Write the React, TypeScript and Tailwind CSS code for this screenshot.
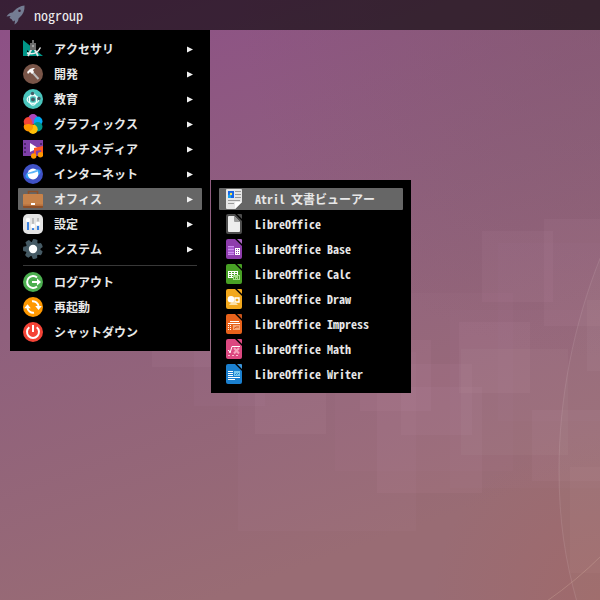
import type { ReactNode } from "react";

const FONT =
  "font-['Noto_Sans_Mono_CJK_JP','Noto_Sans_CJK_JP',monospace]";

/* ---------- wallpaper ---------- */

const SQUARES: [number, number, number, number, number][] = [
  [482, 231, 71, 71, 0.045],
  [544, 219, 107, 107, 0.04],
  [450, 310, 170, 178, 0.015],
  [459, 322, 71, 71, 0.045],
  [461, 349, 107, 106, 0.035],
  [498, 243, 120, 178, 0.015],
  [360, 340, 71, 71, 0.04],
  [401, 364, 71, 71, 0.04],
  [377, 387, 105, 106, 0.04],
  [335, 293, 178, 178, 0.02],
  [532, 410, 71, 71, 0.04],
  [570, 467, 106, 106, 0.03],
  [587, 300, 71, 71, 0.045],
  [238, 352, 178, 179, 0.025],
  [255, 363, 71, 71, 0.045],
  [194, 300, 71, 106, 0.025],
  [152, 296, 71, 71, 0.045],
];

function Wallpaper() {
  return (
    <svg
      aria-hidden="true"
      className="absolute inset-0 h-full w-full"
      viewBox="0 0 600 600"
      preserveAspectRatio="xMidYMid slice"
    >
      <defs>
        <linearGradient id="sky" x1="0" y1="0" x2="0.35" y2="1">
          <stop offset="0" stopColor="#8d4f87" />
          <stop offset="0.5" stopColor="#8f607d" />
          <stop offset="1" stopColor="#996c74" />
        </linearGradient>
        <radialGradient id="warm" cx="1" cy="1" r="0.28">
          <stop offset="0" stopColor="#a56863" stopOpacity="0.5" />
          <stop offset="1" stopColor="#a56863" stopOpacity="0" />
        </radialGradient>
        <radialGradient id="dusk" cx="1" cy="0" r="0.6">
          <stop offset="0" stopColor="#80586a" stopOpacity="0.5" />
          <stop offset="1" stopColor="#80586a" stopOpacity="0" />
        </radialGradient>
      </defs>
      <rect width="600" height="600" fill="url(#sky)" />
      <rect width="600" height="600" fill="url(#warm)" />
      <rect width="600" height="600" fill="url(#dusk)" />
      {SQUARES.map(([x, y, w, h, o], i) => (
        <rect key={i} x={x} y={y} width={w} height={h} fill="#ffd8ee" opacity={o} />
      ))}
      <path
        d="M601 256C573 325 559 400 559 470C559 520 565 560 577 602H601Z"
        fill="#d8e0b0"
        fillOpacity="0.04"
        stroke="#e0c4cc"
        strokeOpacity="0.16"
      />
      <path d="M547 601Q577 580 601 556" fill="none" stroke="#e8c8b0" strokeOpacity="0.25" />
    </svg>
  );
}

/* ---------- icons ---------- */

function Icon({ children }: { children: ReactNode }) {
  return (
    <svg aria-hidden="true" width="20" height="20" viewBox="0 0 20 20" className="shrink-0">
      {children}
    </svg>
  );
}

const AccessoriesIcon = () => (
  <Icon>
    <path d="M0 1L20 17H0Z" fill="#009688" />
    <path d="M4 11V13H6Z" fill="#000" />
    <path d="M8.5 10L5 17M11.5 10L15 17" stroke="#e0e0e0" strokeWidth="1.8" />
    <path d="M4 14Q13 17 17.5 8.5" fill="none" stroke="#eee" strokeWidth="1.4" />
    <path d="M9 1H11V4H13V11H7V4H9Z" fill="#6b6b6b" />
    <circle cx="10" cy="7" r="1.2" fill="#a5a5a5" />
  </Icon>
);

const DevelopmentIcon = () => (
  <Icon>
    <circle cx="10" cy="10" r="10" fill="#795548" />
    <path d="M9 8L15.5 15" stroke="#bdbdbd" strokeWidth="2" />
    <path d="M4 8L7 5L10 4H12L10 6L11 8L9 10L7 8L5 10Z" fill="#fafafa" />
  </Icon>
);

const EducationIcon = () => (
  <Icon>
    <circle cx="10" cy="10" r="10" fill="#4ac5bd" />
    <g fill="none" stroke="#f4ffff" strokeWidth="1.3">
      <ellipse cx="10" cy="10.5" rx="5.8" ry="3.8" />
      <ellipse cx="10" cy="10.5" rx="3.6" ry="5.6" />
    </g>
    <circle cx="10" cy="10.5" r="2" fill="#455a64" />
    <circle cx="9.5" cy="4.5" r="1.7" fill="#455a64" />
    <circle cx="16" cy="9.5" r="1.7" fill="#455a64" />
  </Icon>
);

const GraphicsIcon = () => (
  <Icon>
    <circle cx="10" cy="4.8" r="4.8" fill="#ab47bc" />
    <circle cx="14.8" cy="7.3" r="4.7" fill="#03a9f4" />
    <circle cx="14.8" cy="12.8" r="4.7" fill="#009688" />
    <circle cx="10" cy="15.3" r="4.7" fill="#ffc107" />
    <circle cx="5.4" cy="12.8" r="4.7" fill="#ff9800" />
    <path d="M2 11A4.8 4.8 0 1 1 10 6Q11 10 9 11Q5 9 2 11Z" fill="#f44336" />
    <path d="M6 3Q9 5 9.5 10L11 10Q10 5 14 2.5A4.8 4.8 0 0 0 6 3Z" fill="#ab47bc" />
  </Icon>
);

const MultimediaIcon = () => (
  <Icon>
    <path d="M0 1H20V17H0Z" fill="#7e3fa8" />
    <path
      d="M1 4H3V6H1ZM1 8H3V10H1ZM1 12H3V14H1ZM17 4H19V6H17ZM17 8H19V10H17Z"
      fill="#4f2570"
    />
    <path d="M7 4L15 9L7 13Z" fill="#fff" />
    <path d="M11 9L20 7V16H18V11L13 12V18H11Z" fill="#ff5722" />
    <circle cx="10.7" cy="17" r="2.7" fill="#ff9800" />
    <circle cx="17.5" cy="15.8" r="2.7" fill="#ff9800" />
  </Icon>
);

const InternetIcon = () => (
  <Icon>
    <circle cx="10" cy="10" r="10" fill="#3f51c5" />
    <ellipse cx="10" cy="10" rx="8" ry="4" transform="rotate(-22 10 10)" fill="#2f9cf3" />
    <circle cx="10" cy="10" r="5.4" fill="#fff" />
    <path d="M4.5 9L13.6 6L14.6 7.4Q10 9.8 5 10Z" fill="#5ab4f8" />
  </Icon>
);

const OfficeIcon = () => (
  <Icon>
    <path d="M5.5 5V2.5H14.5V5" fill="none" stroke="#8d4f28" strokeWidth="1.6" />
    <rect y="5" width="20" height="14" rx="1" fill="#8d4f28" />
    <rect y="5" width="20" height="12" rx="1" fill="#c6824a" />
    <path d="M0 15.5H20V17H0Z" fill="#b56f3c" />
    <path d="M8 14H12V16H8Z" fill="#fff" />
  </Icon>
);

const SettingsIcon = () => (
  <Icon>
    <rect width="20" height="20" rx="5" fill="#e4e4e4" />
    <path d="M9 4H11V12H9ZM14 4H16V9H14Z" fill="#bdbdbd" />
    <path d="M4 8H6V16H4ZM9 14H11V16H9ZM14 11H16V16H14Z" fill="#3b82e0" />
    <g fill="#fff">
      <circle cx="5" cy="6" r="2.2" />
      <circle cx="10" cy="12" r="2.2" />
      <circle cx="15" cy="9.7" r="2.2" />
    </g>
  </Icon>
);

const SystemIcon = () => (
  <Icon>
    <g fill="#455a64">
      <circle cx="10" cy="10" r="7.3" />
      {[14, 65, 117, 168, 220, 271, 323].map((a) => (
        <path key={a} d="M7 4L7.8 0.3Q10 -0.3 12.2 0.3L13 4Z" transform={`rotate(${a} 10 10)`} />
      ))}
    </g>
    <circle cx="10" cy="10" r="4.2" fill="#fff" />
  </Icon>
);

const LogoutIcon = () => (
  <Icon>
    <circle cx="10" cy="10" r="10" fill="#4caf50" />
    <path d="M14 5.4A6 6 0 1 0 14 14.6" fill="none" stroke="#fff" strokeWidth="2" />
    <path d="M9 9H14V6.5L18 10L14 13.5V11H9Z" fill="#fff" />
  </Icon>
);

const RestartIcon = () => (
  <Icon>
    <circle cx="10" cy="10" r="10" fill="#ff9800" />
    <g fill="none" stroke="#fff" strokeWidth="2">
      <path d="M4.4 10.5A5.8 5.8 0 0 0 11 15.8" />
      <path d="M15.6 9.5A5.8 5.8 0 0 0 9 4.2" />
    </g>
    <path d="M1.2 11.2L4.5 7.2L7.8 11.2ZM12.2 9L15.5 13L18.8 9Z" fill="#fff" />
  </Icon>
);

const ShutdownIcon = () => (
  <Icon>
    <circle cx="10" cy="10" r="10" fill="#f44336" />
    <path d="M6.3 5.2A6 6 0 1 0 13.7 5.2" fill="none" stroke="#fff" strokeWidth="2" />
    <path d="M9 3H11V10H9Z" fill="#fff" />
  </Icon>
);

const AtrilIcon = () => (
  <Icon>
    <path d="M3 0H17Q18 0 18 1V13L11 20H3Q2 20 2 19V1Q2 0 3 0Z" fill="#e6e6e6" />
    <path d="M11 20V14Q11 13 12 13H18Z" fill="#fff" />
    <rect x="4" y="2" width="6" height="7" fill="#1565e8" />
    <path d="M4 6L7 5V9H4Z" fill="#16a4f0" />
    <circle cx="7" cy="5" r="1.2" fill="#ffe14a" />
    <path d="M11 2.5H17M11 5.5H17M11 8.5H17M4 11.5H16M4 14.5H10" stroke="#9a9a9a" />
  </Icon>
);

function LibreIcon({ color, fold, children }: { color: string; fold: string; children?: ReactNode }) {
  return (
    <Icon>
      <path d="M4 0H11L18 7V18Q18 20 16 20H4Q2 20 2 18V2Q2 0 4 0Z" fill={color} />
      <path d="M13 0H17Q18 0 18 1V5Z" fill={fold} />
      {children}
    </Icon>
  );
}

const LibreOfficeIcon = () => (
  <LibreIcon color="#4d4d4d" fold="#4d4d4d">
    <path d="M5 2H10L16 8V17Q16 18 15 18H5Q4 18 4 17V3Q4 2 5 2Z" fill="#ededed" />
    <path d="M10 2V7Q10 8 11 8H16Z" fill="#999" />
  </LibreIcon>
);

const BaseIcon = () => (
  <LibreIcon color="#8e3cac" fold="#a763c0">
    <path d="M4 7H10V16H4Z" fill="#a95ccf" />
    <path d="M4 7.5H10M4 10.5H10M4 13.5H10M4 15.5H10" stroke="#cf8df0" />
    <path d="M11 9H16V16H11Z" fill="#fff" />
    <path d="M12 10.5H15M12 12.5H15M12 14.5H15" stroke="#8e3cac" strokeDasharray="1 1" />
  </LibreIcon>
);

const CalcIcon = () => (
  <LibreIcon color="#48a025" fold="#48a025">
    <path d="M4 7H14V14H4Z" fill="#fff" />
    <path d="M5 8.5H13M5 10.5H13M5 12.5H13" stroke="#48a025" strokeDasharray="2 1" />
    <path d="M9 11H16V16H9Z" fill="#a5df88" />
    <path d="M10.5 15V13M12.5 15V14M14.5 15V12" stroke="#48a025" />
  </LibreIcon>
);

const DrawIcon = () => (
  <LibreIcon color="#f2a81d" fold="#f2a81d">
    <path d="M11 9H15V13H11Z" fill="none" stroke="#fff" strokeWidth="1.4" />
    <path d="M9.5 11L14 16H5Z" fill="#fbe1a8" />
    <circle cx="7" cy="10.3" r="3.3" fill="#fff" />
  </LibreIcon>
);

const ImpressIcon = () => (
  <LibreIcon color="#e8621b" fold="#c9551b">
    <path d="M6 7.5H15M4 9.5H16" stroke="#fff" />
    <path d="M4 11.5H8M4 13.5H8M4 15.5H8" stroke="#fff" strokeDasharray="1 1" />
    <path d="M9 11H16V16H9Z" fill="#f7a878" />
    <path d="M10 14.5L12 13H15" fill="none" stroke="#cf4b12" />
  </LibreIcon>
);

const MathIcon = () => (
  <LibreIcon color="#dc4880" fold="#dc4880">
    <path d="M4 11.5H5L6 14L8 7.5H16" fill="none" stroke="#fff" />
    <path d="M10 9L15 14.5M15 9L10 14.5" stroke="#f6a1bb" strokeWidth="2" />
    <path d="M4 16.5H16" stroke="#f8c0d0" strokeDasharray="2 2" />
  </LibreIcon>
);

const WriterIcon = () => (
  <LibreIcon color="#1b80cf" fold="#3b95db">
    <path d="M4 7.5H9M4 9.5H9M4 11.5H9M4 13.5H16M4 15.5H11" stroke="#fff" />
    <path d="M10 7H16V12H10Z" fill="#79c9ef" />
    <path d="M11 11L12.5 9.5L13.5 10.5L15 9" fill="none" stroke="#1b80cf" />
  </LibreIcon>
);

const RocketIcon = () => (
  <Icon>
    <path
      fill="#747c92"
      fillRule="evenodd"
      d="M18.5 0.5Q12.5 1 8 6L6.5 7.5Q3 7.5 0.5 11.5L4.5 11L3.5 13Q6 13.5 7 16.5L9 15.5L8.5 19.5Q12.5 17 12.5 13.5L14 12Q19 7.5 18.5 0.5ZM13.5 4.5A1.3 1.3 0 1 1 13.5 7.1A1.3 1.3 0 1 1 13.5 4.5Z"
    />
  </Icon>
);

/* ---------- menus ---------- */

type Entry = { label: string; icon: ReactNode; submenu?: Entry[]; arrow?: boolean; active?: boolean };

const OFFICE: Entry[] = [
  { label: "Atril 文書ビューアー", icon: <AtrilIcon />, active: true },
  { label: "LibreOffice", icon: <LibreOfficeIcon /> },
  { label: "LibreOffice Base", icon: <BaseIcon /> },
  { label: "LibreOffice Calc", icon: <CalcIcon /> },
  { label: "LibreOffice Draw", icon: <DrawIcon /> },
  { label: "LibreOffice Impress", icon: <ImpressIcon /> },
  { label: "LibreOffice Math", icon: <MathIcon /> },
  { label: "LibreOffice Writer", icon: <WriterIcon /> },
];

const CATEGORIES: Entry[] = [
  { label: "アクセサリ", icon: <AccessoriesIcon />, arrow: true },
  { label: "開発", icon: <DevelopmentIcon />, arrow: true },
  { label: "教育", icon: <EducationIcon />, arrow: true },
  { label: "グラフィックス", icon: <GraphicsIcon />, arrow: true },
  { label: "マルチメディア", icon: <MultimediaIcon />, arrow: true },
  { label: "インターネット", icon: <InternetIcon />, arrow: true },
  { label: "オフィス", icon: <OfficeIcon />, arrow: true, active: true, submenu: OFFICE },
  { label: "設定", icon: <SettingsIcon />, arrow: true },
  { label: "システム", icon: <SystemIcon />, arrow: true },
];

const SESSION: Entry[] = [
  { label: "ログアウト", icon: <LogoutIcon /> },
  { label: "再起動", icon: <RestartIcon /> },
  { label: "シャットダウン", icon: <ShutdownIcon /> },
];

function MenuItem({ entry }: { entry: Entry }) {
  return (
    <li className="relative">
      <button
        type="button"
        className={
          "flex h-[22px] w-full items-center gap-[11px] rounded-[1px] pr-[9px] pl-[5px] text-left text-xs font-bold whitespace-nowrap text-[#e8e8e8] " +
          (entry.active ? "bg-[#666666]" : "hover:bg-[#666666]")
        }
      >
        {entry.icon}
        <span className="flex-1">{entry.label}</span>
        {entry.arrow && (
          <svg aria-hidden="true" width="6" height="8" viewBox="0 0 6 8" className="shrink-0">
            <path d="M0 1.5L6 4.5L0 7.5Z" fill="#f0f0f0" />
          </svg>
        )}
      </button>
      {entry.submenu && (
        <div className="absolute -top-2 left-full ml-[9px] w-[200px] bg-black p-2">
          <MenuList entries={entry.submenu} />
        </div>
      )}
    </li>
  );
}

function MenuList({ entries }: { entries: Entry[] }) {
  return (
    <ul className="flex flex-col gap-[3px]">
      {entries.map((entry) => (
        <MenuItem key={entry.label} entry={entry} />
      ))}
    </ul>
  );
}

export default function App() {
  return (
    <div className={`relative min-h-screen overflow-hidden ${FONT}`}>
      <Wallpaper />
      <div className="relative">
        <header className="flex h-[30px] items-center bg-black/60 px-[6px]">
          <button type="button" className="flex items-center gap-2 text-sm text-[#eeeeee]">
            <RocketIcon />
            <span>nogroup</span>
          </button>
        </header>
        <nav className="ml-[10px] w-[200px] bg-black p-2">
          <MenuList entries={CATEGORIES} />
          <hr className="mx-[5px] my-[5px] border-[#383838]" />
          <MenuList entries={SESSION} />
        </nav>
      </div>
    </div>
  );
}
